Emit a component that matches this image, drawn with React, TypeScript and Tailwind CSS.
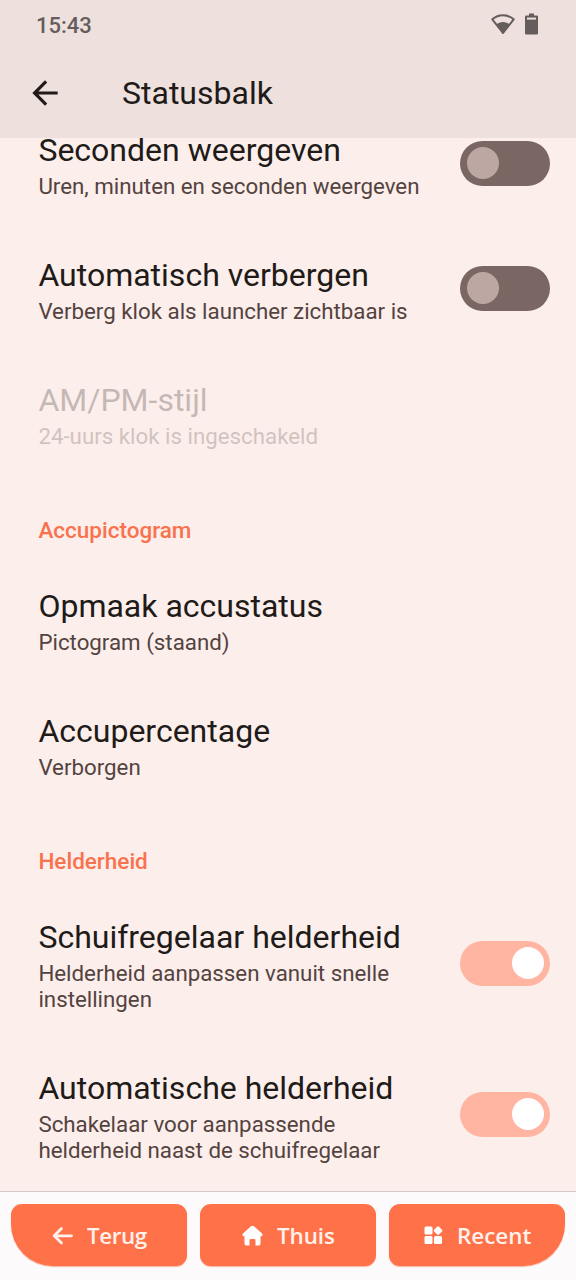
import React from "react";

type RowProps = { title: string; lines: string[]; toggle?: "on" | "off"; disabled?: boolean };

function Toggle({ on }: { on: boolean }) {
  return (
    <div
      role="switch"
      aria-checked={on}
      className={
        on
          ? "flex h-[45px] w-[90px] shrink-0 items-center justify-end rounded-full bg-[#ffb5a1] px-[6.4px]"
          : "flex h-[45px] w-[90px] shrink-0 items-center rounded-full bg-[#7a6764] px-[6.4px]"
      }
    >
      <div className={on ? "size-8 rounded-full bg-white" : "size-8 rounded-full bg-[#bda7a2]"} />
    </div>
  );
}

function Row({ title, lines, toggle, disabled }: RowProps) {
  return (
    <div
      className={
        lines.length > 1
          ? "flex h-[151px] shrink-0 items-center justify-between pr-[25.6px] pl-[38.4px]"
          : "flex h-[125px] shrink-0 items-center justify-between pr-[25.6px] pl-[38.4px]"
      }
    >
      <div className={disabled ? "pt-1 opacity-25" : "pt-1"}>
        <div className="mb-1 text-[32px] leading-[38px] whitespace-nowrap text-[#201a18]">{title}</div>
        {lines.map((line) => (
          <div key={line} className="text-[22.3px] leading-[26.25px] whitespace-nowrap text-[#53433f]">
            {line}
          </div>
        ))}
      </div>
      {toggle && <Toggle on={toggle === "on"} />}
    </div>
  );
}

function Section({ title }: { title: string }) {
  return (
    <h2 className="flex h-[81px] shrink-0 items-center pt-[30px] pl-[38.4px] text-[22.5px] font-medium text-[#f9724e]">
      {title}
    </h2>
  );
}

export default function App() {
  return (
    <div className="flex h-[1280px] w-[576px] flex-col overflow-hidden bg-[#fceeeb] font-['Roboto',sans-serif]">
      <header className="h-[137.5px] shrink-0 bg-[#ede0dd]">
        <div className="flex h-[50px] items-center justify-between pr-[38px] pl-9 text-[22px] font-medium text-[#655d5b]">
          <span>15:43</span>
          <div className="flex items-center pb-[2px]">
            <svg width="24" height="22" viewBox="0 0 24 22" fill="none">
              <path d="M12 20 1.3 6.300C7.500 0.900 16.500 0.900 22.700 6.300Z" stroke="#655d5b" strokeWidth="2" strokeLinejoin="round" />
              <path d="M12 21 5.300 11.800C8.500 8 15.500 8 18.700 11.800Z" fill="#655d5b" />
            </svg>
            <svg className="ml-[10px]" width="13" height="22" viewBox="0 0 13 22">
              <path d="M4 0.6h5v1.9h2.8q1.2 0 1.2 1.2v16.6q0 1.2-1.2 1.2H1.2Q0 21.500 0 20.300V3.700Q0 2.500 1.2 2.500H4Z" fill="#655d5b" />
              <path d="M2 4.600h9v2H2z" fill="#ede0dd" />
            </svg>
          </div>
        </div>
        <div className="flex h-[86px] items-center pb-px pl-[26px]">
          <svg width="38" height="38" viewBox="0 0 24 24" fill="#201a18">
            <path d="M20 11H7.8l5.600-5.600L12 4l-8 8 8 8 1.400-1.400L7.800 13H20z" />
          </svg>
          <h1 className="ml-[58px] text-[32px] text-[#201a18]">Statusbalk</h1>
        </div>
      </header>
      <main className="flex h-[1053.5px] shrink-0 flex-col">
        <div className="-mt-[37px] flex shrink-0 flex-col">
          <Row title="Seconden weergeven" lines={["Uren, minuten en seconden weergeven"]} toggle="off" />
          <Row title="Automatisch verbergen" lines={["Verberg klok als launcher zichtbaar is"]} toggle="off" />
          <Row title="AM/PM-stijl" lines={["24-uurs klok is ingeschakeld"]} disabled />
          <Section title="Accupictogram" />
          <Row title="Opmaak accustatus" lines={["Pictogram (staand)"]} />
          <Row title="Accupercentage" lines={["Verborgen"]} />
          <Section title="Helderheid" />
          <Row title="Schuifregelaar helderheid" lines={["Helderheid aanpassen vanuit snelle", "instellingen"]} toggle="on" />
          <Row title="Automatische helderheid" lines={["Schakelaar voor aanpassende", "helderheid naast de schuifregelaar"]} toggle="on" />
        </div>
      </main>
      <nav className="flex h-[89px] shrink-0 gap-[13px] border-t border-[#d5c8c6] bg-[#fdfafb] px-[11px] pt-3 font-['Open_Sans',sans-serif] text-[22.4px] font-semibold text-[#fff1ec]">
        <button className="flex h-[62px] w-44 items-center rounded-[11px] rounded-bl-[42px] bg-[#ff7249] pl-[41px] shadow-[0_1px_1px_#f5b5a0]">
          <svg className="mt-px" width="21" height="20" viewBox="0 0 21 20" fill="none" stroke="#fff1ec" strokeWidth="2.8" strokeLinecap="round" strokeLinejoin="round">
            <path d="M9.500 2.500 2.200 9.800 9.500 17.100M2.800 9.800H19.500" />
          </svg>
          <span className="mt-[2px] ml-3.5 tracking-[-0.4px]">Terug</span>
        </button>
        <button className="flex h-[62px] w-44 items-center rounded-[11px] bg-[#ff7249] pl-[42px] shadow-[0_1px_1px_#f5b5a0]">
          <svg width="21" height="21" viewBox="0 0 21 21" fill="#fff">
            <path d="M9 1.300q1.500-1.300 3 0l8 7.200q1 1 .4 2-.4.7-1.400.7h-.5v7.500q0 1.800-1.800 1.800h-3.200v-5.200q0-1.200-1.200-1.200h-3.600q-1.200 0-1.200 1.200v5.200H4.300q-1.800 0-1.800-1.800v-7.500H2q-1 0-1.400-.7-.6-1 .4-2Z" />
          </svg>
          <span className="mt-[2px] ml-3.5 tracking-[-0.1px]">Thuis</span>
        </button>
        <button className="flex h-[62px] w-44 items-center rounded-[11px] rounded-br-[42px] bg-[#ff7249] pl-[35px] shadow-[0_1px_1px_#f5b5a0]">
          <svg width="19" height="19" viewBox="0 0 19 19" fill="#fff">
            <rect x="0.500" y="0.500" width="8" height="8" rx="1.500" />
            <rect x="0.500" y="10" width="8" height="8" rx="1.500" />
            <rect x="10" y="10" width="8" height="8" rx="1.500" />
            <rect x="10.700" y="1.200" width="6.800" height="6.800" rx="1.300" transform="rotate(45 14.100 4.600)" />
          </svg>
          <span className="mt-[2px] ml-3.5">Recent</span>
        </button>
      </nav>
    </div>
  );
}
